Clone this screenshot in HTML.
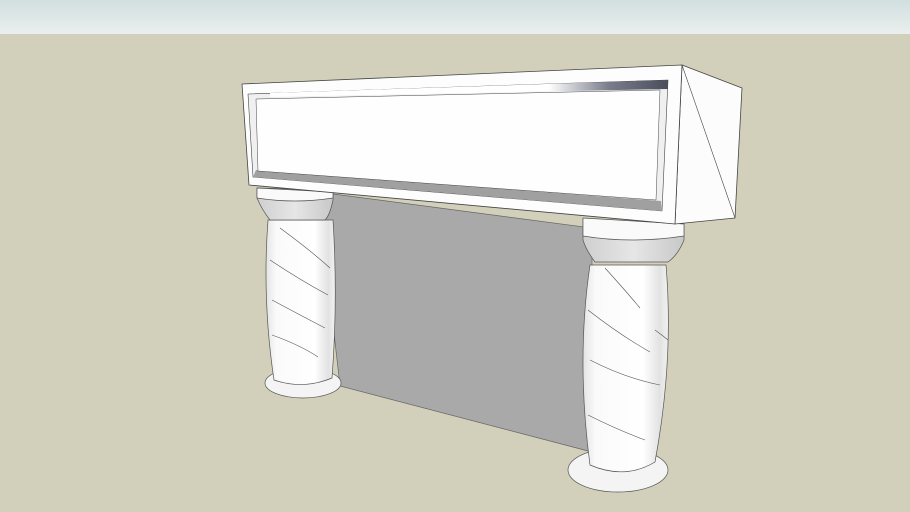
<!DOCTYPE html><html><head><style>html,body{margin:0;padding:0;width:910px;height:512px;overflow:hidden;background:#d2d0ba}</style></head><body>
<svg width="910" height="512" viewBox="0 0 910 512" xmlns="http://www.w3.org/2000/svg">
<defs>
<linearGradient id="sky" x1="0" y1="0" x2="0" y2="1"><stop offset="0" stop-color="#d2dfdf"/><stop offset="1" stop-color="#e9efee"/></linearGradient>
<linearGradient id="leg" x1="0" y1="0" x2="1" y2="0"><stop offset="0" stop-color="#e4e4e4"/><stop offset="0.15" stop-color="#fafafa"/><stop offset="0.7" stop-color="#ffffff"/><stop offset="0.9" stop-color="#e2e2e2"/><stop offset="1" stop-color="#f2f2f2"/></linearGradient>
<linearGradient id="cap" x1="0" y1="0" x2="1" y2="0"><stop offset="0" stop-color="#cfcfcf"/><stop offset="0.5" stop-color="#e6e6e6"/><stop offset="1" stop-color="#c8c8c8"/></linearGradient>
<linearGradient id="sh" x1="0" y1="0" x2="1" y2="0"><stop offset="0" stop-color="#ffffff"/><stop offset="0.7" stop-color="#ffffff"/><stop offset="0.85" stop-color="#7a7d8c"/><stop offset="1" stop-color="#4a4d5c"/></linearGradient>
</defs>
<rect width="910" height="512" fill="#d2d0ba"/>
<rect width="910" height="34" fill="url(#sky)"/>
<polygon points="318,192 592,228 592,452 340,386" fill="#a9a9a9" stroke="#666" stroke-width="0.7"/>
<g stroke="#555" stroke-width="0.7">
<ellipse cx="303" cy="383" rx="38" ry="15" fill="#f4f4f4"/>
<path d="M268,220 Q262,300 274,380 Q303,390 332,378 Q338,300 333,220 Z" fill="url(#leg)"/>
<path d="M257,188 L333,190 L333,200 Q330,215 325,220 L270,220 Q262,210 257,198 Z" fill="url(#cap)"/>
<path d="M257,188 L333,192 L333,198 Q295,204 257,198 Z" fill="#fafafa"/>
<g fill="none" stroke-width="0.6"><path d="M280,228 Q310,250 330,268"/><path d="M270,260 Q300,280 328,295"/><path d="M272,300 Q300,315 325,328"/><path d="M272,335 Q300,345 318,357"/></g>
<ellipse cx="618" cy="470" rx="50" ry="22" fill="#f4f4f4"/>
<path d="M590,265 Q576,360 590,465 Q625,480 655,462 Q674,360 666,265 Z" fill="url(#leg)"/>
<path d="M583,220 L684,225 L684,240 Q678,255 668,262 L595,262 Q586,250 583,240 Z" fill="url(#cap)"/>
<path d="M583,218 L684,224 L684,236 Q632,244 583,236 Z" fill="#fafafa"/>
<g fill="none" stroke-width="0.6"><path d="M605,268 Q625,290 640,308"/><path d="M588,310 Q620,335 650,352"/><path d="M590,360 Q625,378 660,385"/><path d="M588,415 Q618,430 645,440"/><path d="M655,330 Q662,335 668,340"/></g>
</g>
<g stroke="#444" stroke-width="0.8" stroke-linejoin="round">
<polygon points="682,65 742,88 735,218 675,224" fill="#fcfcfc"/>
<line x1="682" y1="65" x2="735" y2="218" stroke-width="0.6"/>
<polygon points="242,84 682,65 675,224 249,185" fill="#fdfdfd"/>
<polygon points="248,94 668,80 662,211 253,177" fill="#f0f0f0" stroke-width="0.6"/>
<polygon points="253,177 662,211 661,201 256,170" fill="#a0a0a0" stroke="none"/>
<polygon points="270,93 668,80 668,89 270,97" fill="url(#sh)" stroke="none"/>
<polygon points="256,99 660,90 656,200 258,171" fill="#fefefe" stroke-width="0.5"/>
</g>
</svg>
</body></html>
